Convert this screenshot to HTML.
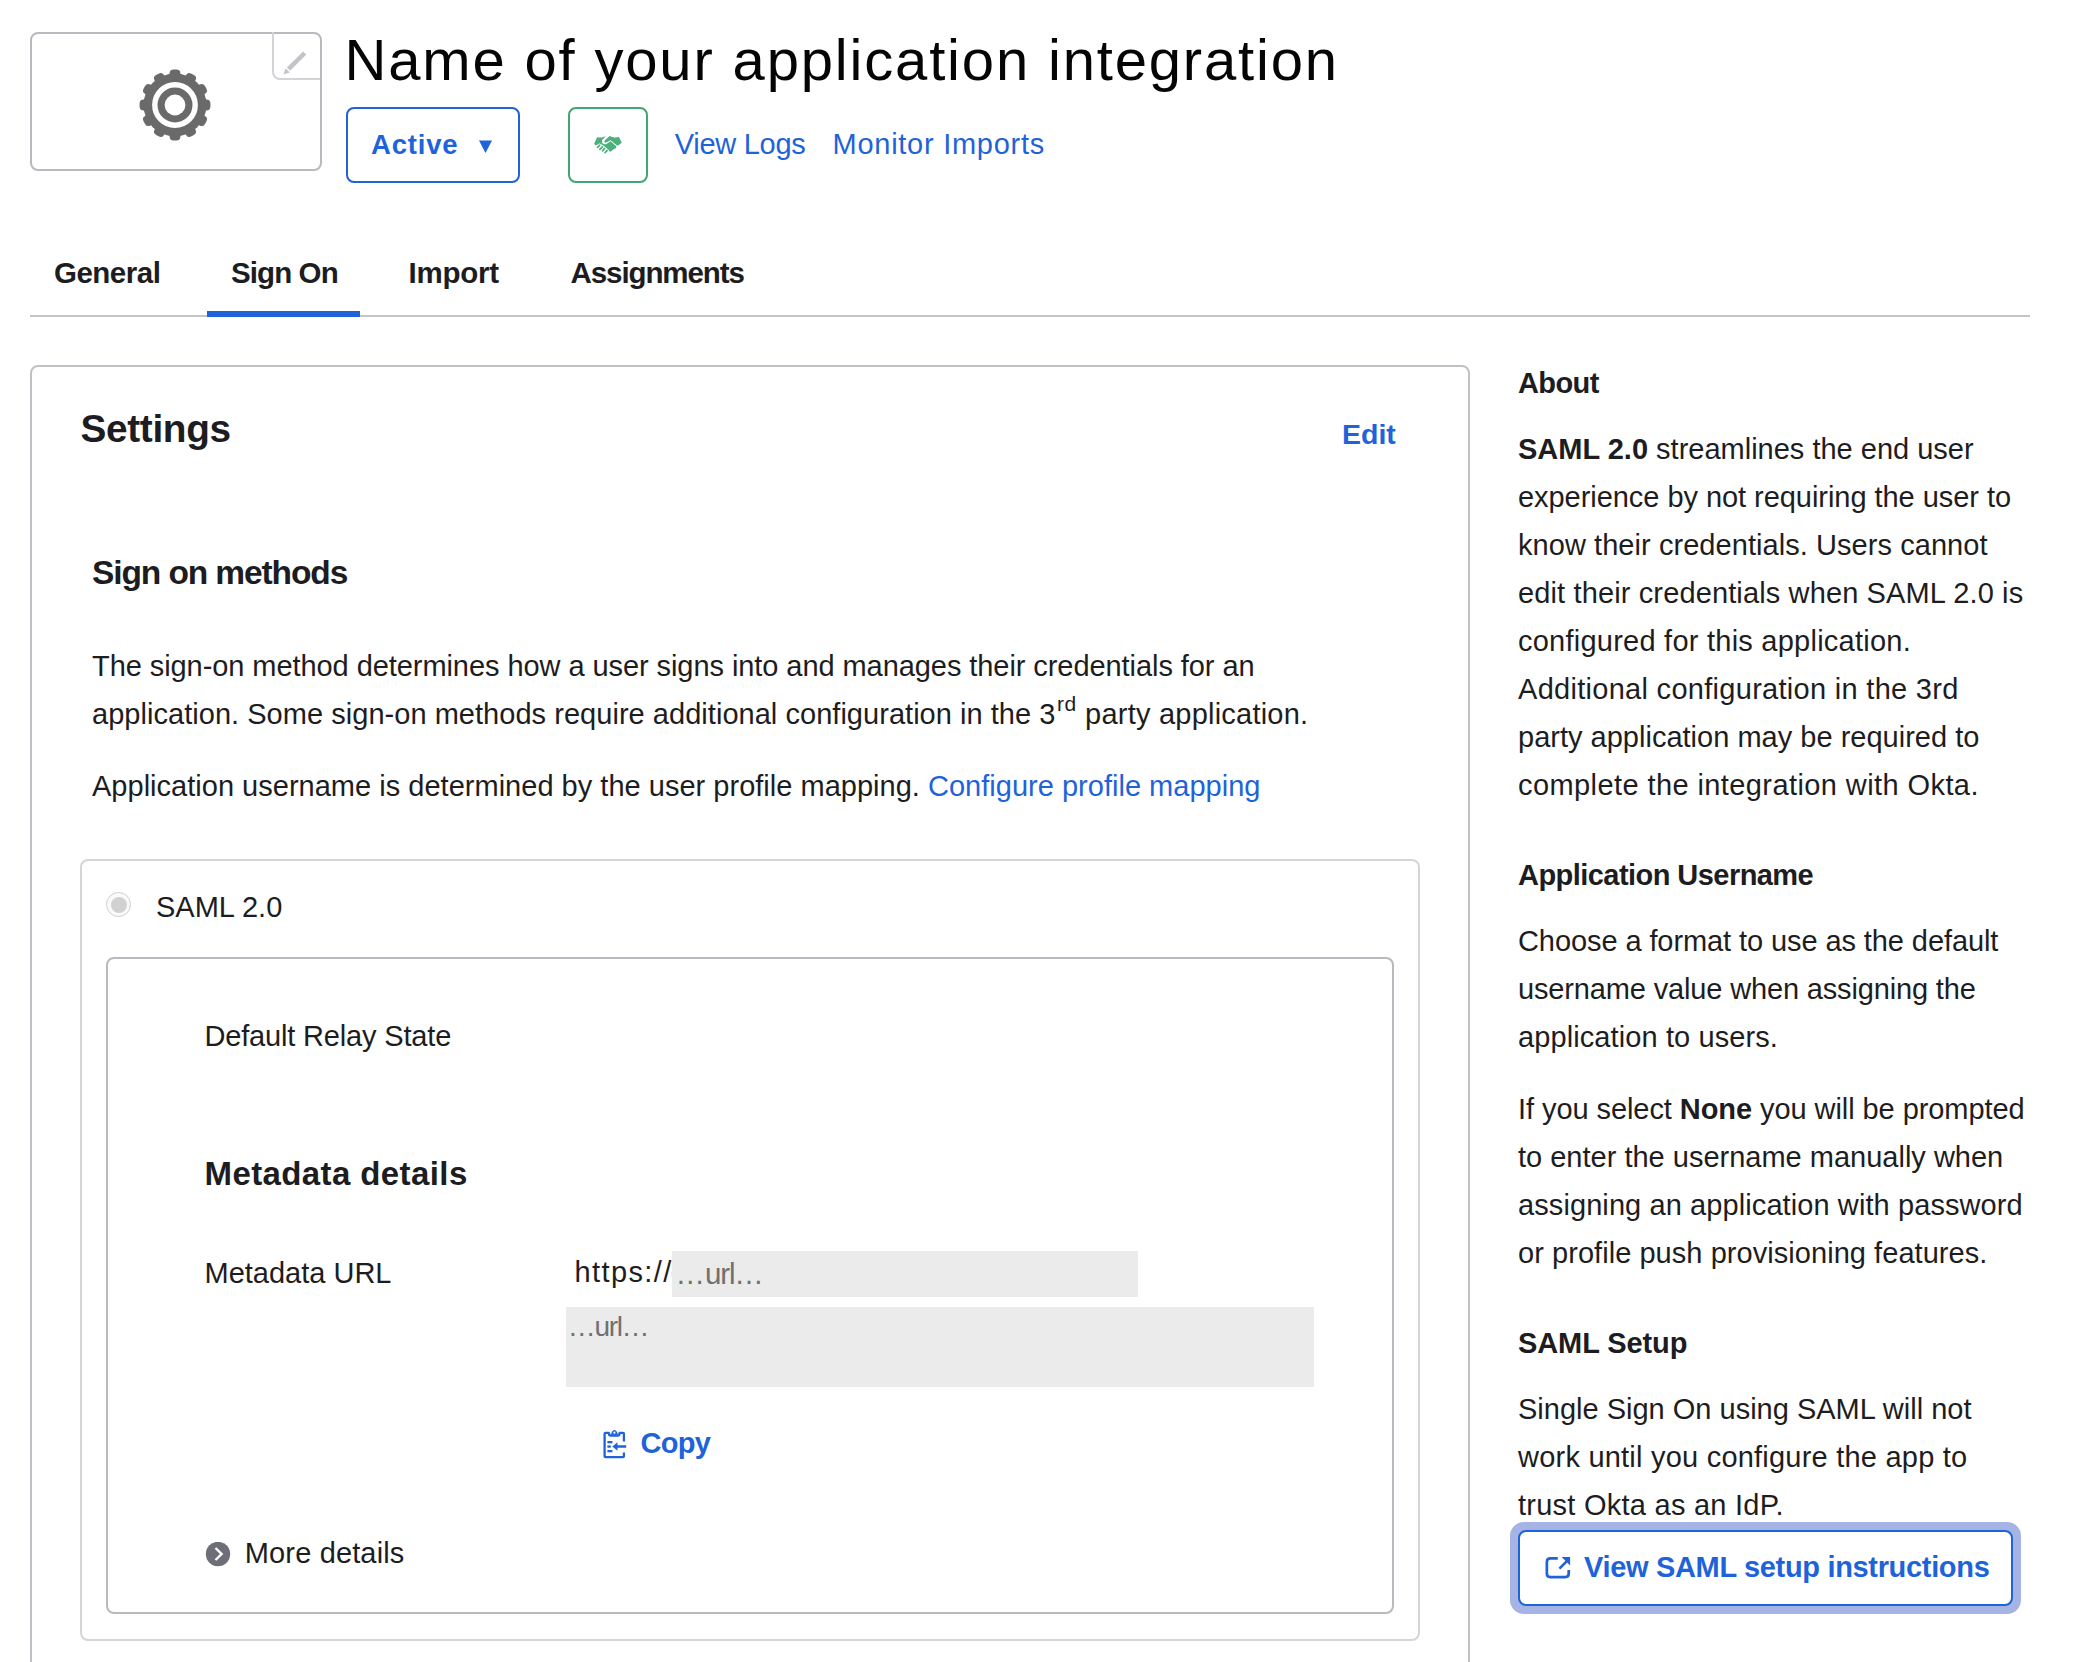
<!DOCTYPE html>
<html><head><meta charset="utf-8"><style>
html,body{margin:0;padding:0;background:#fff;}
body{width:2076px;height:1662px;overflow:hidden;position:relative;font-family:"Liberation Sans",sans-serif;color:#1d1d21;}
.t{position:absolute;white-space:pre;}
.box{position:absolute;box-sizing:content-box;}
sup{font-size:21px;line-height:0;position:relative;top:-2px;vertical-align:super;margin-left:1.5px;letter-spacing:0.6px;}
b{font-weight:700;}
</style></head><body>

<div class="box" style="left:30px;top:32px;width:288px;height:135px;border:2px solid #b9b9bf;border-radius:8px;"></div>
<div class="box" style="left:272px;top:32px;width:46px;height:46px;border:2px solid #d3d3d8;border-top:none;border-right:none;border-bottom-left-radius:8px;"></div>
<svg class="box" style="left:278px;top:48px" width="32" height="32" viewBox="278 48 32 32"><path d="M286.9 67.6 L303.1 51.4 L306.3 54.6 L290.1 70.8 Z" fill="#c3c3c9"/><path d="M283.4 74.6 L285.6 68.2 L289.8 72.4 Z" fill="#c3c3c9"/></svg>
<svg class="box" style="left:139px;top:69px" width="72" height="72" viewBox="-36 -36 72 72"><circle r="31.5" fill="#6a6a6a"/><rect x="-5.4" y="-35.4" width="10.8" height="10" rx="4" fill="#6a6a6a" transform="rotate(0)"/><rect x="-5.4" y="-35.4" width="10.8" height="10" rx="4" fill="#6a6a6a" transform="rotate(30)"/><rect x="-5.4" y="-35.4" width="10.8" height="10" rx="4" fill="#6a6a6a" transform="rotate(60)"/><rect x="-5.4" y="-35.4" width="10.8" height="10" rx="4" fill="#6a6a6a" transform="rotate(90)"/><rect x="-5.4" y="-35.4" width="10.8" height="10" rx="4" fill="#6a6a6a" transform="rotate(120)"/><rect x="-5.4" y="-35.4" width="10.8" height="10" rx="4" fill="#6a6a6a" transform="rotate(150)"/><rect x="-5.4" y="-35.4" width="10.8" height="10" rx="4" fill="#6a6a6a" transform="rotate(180)"/><rect x="-5.4" y="-35.4" width="10.8" height="10" rx="4" fill="#6a6a6a" transform="rotate(210)"/><rect x="-5.4" y="-35.4" width="10.8" height="10" rx="4" fill="#6a6a6a" transform="rotate(240)"/><rect x="-5.4" y="-35.4" width="10.8" height="10" rx="4" fill="#6a6a6a" transform="rotate(270)"/><rect x="-5.4" y="-35.4" width="10.8" height="10" rx="4" fill="#6a6a6a" transform="rotate(300)"/><rect x="-5.4" y="-35.4" width="10.8" height="10" rx="4" fill="#6a6a6a" transform="rotate(330)"/><circle r="20.2" fill="none" stroke="#fff" stroke-width="5.4"/><circle r="10.4" fill="#fff"/></svg>
<div class="box" style="left:346px;top:107px;width:170px;height:72px;border:2px solid #1f63d9;border-radius:8px;"></div>
<svg class="box" style="left:478px;top:140px" width="15" height="14" viewBox="0 0 15 14"><path d="M1 0.5 H14 L7.5 13 Z" fill="#1f63d9"/></svg>
<div class="box" style="left:568px;top:107px;width:76px;height:72px;border:2px solid #40a773;border-radius:8px;"></div>
<svg class="box" style="left:590px;top:130px" width="36" height="28" viewBox="0 0 36 28"><g fill="#4caf7c"><path d="M7.3 6.9 C9 7.8 11.5 7.8 15.8 6.2 L12.6 9.6 C11.6 10.8 11.8 12.6 12.8 13.5 C13.8 14.4 15.4 14.6 16.8 13.8 L20.5 11.3 L26.3 16.2 C26.6 17.2 26.2 18.2 25.2 18.5 L23.8 19.2 L21 21.3 C20.5 21.8 19.8 21.8 19.2 21 C18.5 19.6 17.5 18.6 16.8 18.2 L14 16 L11.2 14.2 C10.2 13.4 9.2 13.2 8.4 14 L6.5 15.2 C5.6 15.5 4.6 14.6 4.2 13.4 Z"/><path d="M19.6 6 C21.5 6.6 24 7.8 26.2 7.6 L28.3 6.8 C29 7.2 29.6 8 29.8 8.8 L31.8 12.4 L28.6 15.2 C28 15.8 27.2 15.8 26.7 15.3 L20.5 10.3 L16.5 12.6 C15.6 13 14.6 12.6 14.3 11.6 C14.2 11.2 14.4 10.8 14.7 10.5 Z"/></g><g stroke="#4caf7c" stroke-width="1.7" stroke-linecap="round"><path d="M9.7 15.2 L7.5 17.4"/><path d="M12.4 16.8 L9.9 19.4"/><path d="M14.6 18.4 L12.5 20.9"/><path d="M17.2 20.4 L15 22.7"/></g></svg>
<div class="box" style="left:30px;top:315px;width:2000px;height:2px;background:#c4c4ca"></div>
<div class="box" style="left:207px;top:311px;width:153px;height:6px;background:#1f63d9"></div>
<div class="box" style="left:30px;top:365px;width:1436px;height:1400px;border:2px solid #c0c0c6;border-radius:8px;"></div>
<div class="box" style="left:80px;top:859px;width:1336px;height:778px;border:2px solid #d5d5d9;border-radius:8px;"></div>
<div class="box" style="left:106px;top:957px;width:1284px;height:653px;border:2px solid #b9b9bf;border-radius:8px;"></div>
<div class="box" style="left:106px;top:892px;width:23px;height:23px;border:1.6px solid #d0d0d0;border-radius:50%;background:#fafafa"></div>
<div class="box" style="left:111px;top:897px;width:16px;height:16px;border-radius:50%;background:#d1d1d1"></div>
<div class="box" style="left:566px;top:1307px;width:748px;height:80px;background:#ebebeb"></div>
<svg class="box" style="left:603px;top:1429px" width="26" height="30" viewBox="0 0 26 30"><g fill="none" stroke="#1f63d9" stroke-width="2.3"><path d="M6 3.8 H2.5 C2 3.8 1.6 4.2 1.6 4.7 V27.3 C1.6 27.8 2 28.2 2.5 28.2 H20 C20.5 28.2 20.9 27.8 20.9 27.3 V23.6"/><path d="M20.9 12.6 V4.7 C20.9 4.2 20.5 3.8 20 3.8 H16.5"/><path d="M6 3.2 V5.3 C6 6 6.5 6.5 7.2 6.5 H15.3 C16 6.5 16.5 6 16.5 5.3 V3.2"/></g>
<path d="M8 5.7 C8.3 3.6 9.6 1 11.4 1 C13.2 1 14.6 3.6 14.9 5.7 Z" fill="#1f63d9"/><circle cx="11.4" cy="3.7" r="1.1" fill="#fff"/>
<g fill="#1f63d9"><rect x="4.4" y="12" width="5" height="2.3"/><rect x="4.4" y="16.4" width="3.4" height="2.3"/><rect x="4.4" y="21" width="5" height="2.3"/><path d="M9.3 17.5 L14.5 13.2 V16.3 H23.2 V18.7 H14.5 V21.8 Z"/></g></svg>
<svg class="box" style="left:205px;top:1542px" width="26" height="26" viewBox="0 0 26 26"><circle cx="13" cy="12" r="12.2" fill="#6e6e78"/><path d="M10.5 6 L16.6 12 L10.5 18" fill="none" stroke="#fff" stroke-width="2.4"/></svg>
<div class="box" style="left:1510px;top:1522px;width:511px;height:92px;border-radius:14px;background:#a6b3e5"></div>
<div class="box" style="left:1518px;top:1530px;width:491px;height:72px;border:2px solid #1f63d9;border-radius:8px;background:#fff"></div>
<svg class="box" style="left:1530px;top:1540px" width="50" height="50" viewBox="0 0 50 50"><g fill="none" stroke="#1f63d9" stroke-width="2.7"><path d="M27.8 18.35 H20.4 C18.1 18.35 16.85 19.6 16.85 21.9 V33.5 C16.85 35.8 18.1 37.05 20.4 37.05 H35.2 C37.5 37.05 38.75 35.8 38.75 33.5 V30"/><path d="M29.4 28.6 L36.6 21.3" stroke-width="2.6"/></g><path d="M31.6 17 H40.1 V25.6 Z" fill="#1f63d9"/></svg>

<div class="t" style="left:344.5px;top:31.09px;font-size:58px;line-height:58px;color:#050505;letter-spacing:1.83px;">Name of your application integration</div>
<div class="t" style="left:371px;top:130.72px;font-size:27.5px;line-height:27.5px;font-weight:700;color:#1f63d9;letter-spacing:0.8px;">Active</div>
<div class="t" style="left:674.7px;top:129.85px;font-size:29px;line-height:29px;color:#1f63d9;letter-spacing:-0.27px;">View Logs</div>
<div class="t" style="left:832.5px;top:129.85px;font-size:29px;line-height:29px;color:#1f63d9;letter-spacing:0.74px;">Monitor Imports</div>
<div class="t" style="left:54px;top:258.02px;font-size:29.5px;line-height:29.5px;font-weight:700;letter-spacing:-0.5px;">General</div>
<div class="t" style="left:231px;top:258.02px;font-size:29.5px;line-height:29.5px;font-weight:700;letter-spacing:-0.9px;">Sign On</div>
<div class="t" style="left:408.5px;top:258.02px;font-size:29.5px;line-height:29.5px;font-weight:700;letter-spacing:-0.26px;">Import</div>
<div class="t" style="left:570.5px;top:258.02px;font-size:29.5px;line-height:29.5px;font-weight:700;letter-spacing:-1.08px;">Assignments</div>
<div class="t" style="left:80.5px;top:410.25px;font-size:38.8px;line-height:38.8px;font-weight:700;letter-spacing:-0.35px;">Settings</div>
<div class="t" style="left:1342px;top:420.17px;font-size:28.5px;line-height:28.5px;font-weight:700;color:#1f63d9;">Edit</div>
<div class="t" style="left:92px;top:556.34px;font-size:33.5px;line-height:33.5px;font-weight:700;letter-spacing:-1.1px;">Sign on methods</div>
<div class="t" style="left:92px;top:651.75px;font-size:29px;line-height:29px;letter-spacing:-0.07px;">The sign-on method determines how a user signs into and manages their credentials for an</div>
<div class="t" style="left:92px;top:699.75px;font-size:29px;line-height:29px;letter-spacing:0.035px;">application. Some sign-on methods require additional configuration in the 3<sup>rd</sup><span style="letter-spacing:0.22px"> party application.</span></div>
<div class="t" style="left:92px;top:771.75px;font-size:29px;line-height:29px;letter-spacing:0.015px;">Application username is determined by the user profile mapping. <span style="color:#1f63d9">Configure profile mapping</span></div>
<div class="t" style="left:156px;top:893.35px;font-size:29px;line-height:29px;">SAML 2.0</div>
<div class="t" style="left:204.5px;top:1021.75px;font-size:29px;line-height:29px;letter-spacing:-0.17px;">Default Relay State</div>
<div class="t" style="left:204.5px;top:1156.86px;font-size:33px;line-height:33px;font-weight:700;letter-spacing:0.4px;">Metadata details</div>
<div class="t" style="left:204.5px;top:1258.65px;font-size:29px;line-height:29px;">Metadata URL</div>
<div class="t" style="left:574.5px;top:1258.35px;font-size:29px;line-height:29px;letter-spacing:1.4px;">https://<span style="margin-left:-2px">c</span></div>
<div class="t" style="left:567.8px;top:1313.29px;font-size:28px;line-height:28px;color:#707070;"><span style="letter-spacing:-1.2px">&hellip;</span><span style="letter-spacing:-1.4px">url</span><span style="letter-spacing:-1.2px">&hellip;</span></div>
<div class="t" style="left:640.5px;top:1428.65px;font-size:29px;line-height:29px;font-weight:700;color:#1f63d9;letter-spacing:-0.7px;">Copy</div>
<div class="t" style="left:244.8px;top:1539.45px;font-size:29px;line-height:29px;letter-spacing:0.14px;">More details</div>
<div class="t" style="left:1518px;top:368.55px;font-size:29px;line-height:29px;font-weight:700;letter-spacing:-0.6px;">About</div>
<div class="t" style="left:1518px;top:435.45px;font-size:29px;line-height:29px;"><b>SAML 2.0</b> streamlines the end user</div>
<div class="t" style="left:1518px;top:483.45px;font-size:29px;line-height:29px;letter-spacing:-0.05px;">experience by not requiring the user to</div>
<div class="t" style="left:1518px;top:531.45px;font-size:29px;line-height:29px;letter-spacing:0.06px;">know their credentials. Users cannot</div>
<div class="t" style="left:1518px;top:579.45px;font-size:29px;line-height:29px;letter-spacing:0.13px;">edit their credentials when SAML 2.0 is</div>
<div class="t" style="left:1518px;top:627.45px;font-size:29px;line-height:29px;letter-spacing:0.24px;">configured for this application.</div>
<div class="t" style="left:1518px;top:675.45px;font-size:29px;line-height:29px;letter-spacing:0.29px;">Additional configuration in the 3rd</div>
<div class="t" style="left:1518px;top:723.45px;font-size:29px;line-height:29px;letter-spacing:0.01px;">party application may be required to</div>
<div class="t" style="left:1518px;top:771.45px;font-size:29px;line-height:29px;letter-spacing:0.41px;">complete the integration with Okta.</div>
<div class="t" style="left:1518px;top:861.45px;font-size:29px;line-height:29px;font-weight:700;letter-spacing:-0.55px;">Application Username</div>
<div class="t" style="left:1518px;top:927.25px;font-size:29px;line-height:29px;letter-spacing:-0.09px;">Choose a format to use as the default</div>
<div class="t" style="left:1518px;top:975.25px;font-size:29px;line-height:29px;letter-spacing:-0.15px;">username value when assigning the</div>
<div class="t" style="left:1518px;top:1023.25px;font-size:29px;line-height:29px;letter-spacing:0.1px;">application to users.</div>
<div class="t" style="left:1518px;top:1095.05px;font-size:29px;line-height:29px;letter-spacing:-0.07px;">If you select <b>None</b> you will be prompted</div>
<div class="t" style="left:1518px;top:1143.05px;font-size:29px;line-height:29px;">to enter the username manually when</div>
<div class="t" style="left:1518px;top:1191.05px;font-size:29px;line-height:29px;letter-spacing:0.09px;">assigning an application with password</div>
<div class="t" style="left:1518px;top:1239.05px;font-size:29px;line-height:29px;letter-spacing:0.05px;">or profile push provisioning features.</div>
<div class="t" style="left:1518px;top:1329.45px;font-size:29px;line-height:29px;font-weight:700;letter-spacing:-0.1px;">SAML Setup</div>
<div class="t" style="left:1518px;top:1394.75px;font-size:29px;line-height:29px;">Single Sign On using SAML will not</div>
<div class="t" style="left:1518px;top:1442.75px;font-size:29px;line-height:29px;letter-spacing:0.22px;">work until you configure the app to</div>
<div class="t" style="left:1518px;top:1490.75px;font-size:29px;line-height:29px;letter-spacing:0.25px;">trust Okta as an IdP.</div>
<div class="t" style="left:1584px;top:1553.45px;font-size:29px;line-height:29px;font-weight:700;color:#1f63d9;letter-spacing:-0.33px;">View SAML setup instructions</div>
<div class="box" style="left:672px;top:1251px;width:466px;height:46px;background:#ebebeb"></div>
<div class="t" style="left:675.5px;top:1258.62px;font-size:29.5px;line-height:29.5px;color:#707070;"><span style="letter-spacing:0.1px">&hellip;</span><span style="letter-spacing:-1.2px">url</span><span style="letter-spacing:0.1px">&hellip;</span></div>
</body></html>
